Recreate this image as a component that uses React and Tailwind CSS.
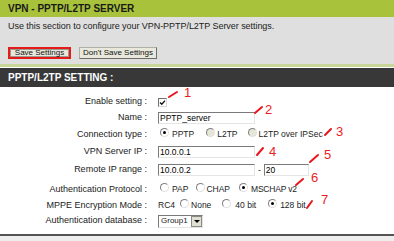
import React from "react";

const font = { fontFamily: '"Liberation Sans", Arial, sans-serif' };

function Radio({ checked, dim }) {
  return (
    <span
      className={`inline-block w-[9px] h-[9px] rounded-full border border-t-[#808080] border-l-[#808080] border-b-[#e0e0e0] border-r-[#e0e0e0] relative shrink-0 ${
        dim ? "bg-[#e6e6d8]" : "bg-white"
      }`}
    >
      {checked && (
        <span className="absolute left-[2px] top-[2px] w-[3px] h-[3px] rounded-full bg-black" />
      )}
    </span>
  );
}

function Input({ value, w }) {
  return (
    <div
      className={`${w} h-[12px] bg-white border border-t-[#7a7a7a] border-l-[#7a7a7a] border-b-[#e4e4e4] border-r-[#e4e4e4] text-[8.5px] leading-[10px] pl-[1px] text-black`}
    >
      {value}
    </div>
  );
}

function Row({ label, h, children }) {
  return (
    <div className={`flex items-center ${h}`}>
      <div className="w-[148px] text-right text-[9px] text-[#222] pr-[1px] whitespace-nowrap">
        {label}
      </div>
      <div className="pl-[10px] flex items-center text-[8.5px] text-[#222] whitespace-nowrap">
        {children}
      </div>
    </div>
  );
}

export default function App() {
  const slashes = [
    [169, 97, 177, 92],
    [255, 113, 262, 107],
    [325, 135, 331, 129],
    [257, 155, 263, 148],
    [310, 162, 318, 155],
    [296, 185, 303, 179],
    [307, 208, 312, 201],
  ];
  const nums = [
    ["1", 184, 86],
    ["2", 265, 103],
    ["3", 336, 125],
    ["4", 269, 145],
    ["5", 324, 148],
    ["6", 311, 171],
    ["7", 321, 193],
  ];
  return (
    <div className="w-[394px] h-[241px] bg-white overflow-hidden relative" style={font}>
      <div className="h-[17px] bg-[#a8c23c] flex items-center pl-[8px] text-[10px] font-bold text-[#1a1a1a]">
        VPN - PPTP/L2TP SERVER
      </div>
      <div className="h-[47px] bg-[#dfdfdf] pl-[8px] pt-[4px]">
        <div className="text-[9px] text-[#222] leading-[11px] tracking-[-0.05px]">
          Use this section to configure your VPN-PPTP/L2TP Server settings.
        </div>
        <div className="flex items-center gap-[8px] mt-[15px]">
          <div className="border-2 border-[#e41b1b] h-[12px] w-[63px] flex items-center justify-center">
            <div className="w-full h-full bg-[#e8e8dc] border border-[#9a9a8e] flex items-center justify-center text-[8px] text-[#111] leading-none whitespace-nowrap">
              Save Settings
            </div>
          </div>
          <div className="h-[12px] w-[78px] bg-[#e8e8dc] border border-[#b0b0a4] border-r-[#6e6e66] border-b-[#6e6e66] flex items-center justify-center text-[8px] text-[#111] leading-none whitespace-nowrap">
            Don't Save Settings
          </div>
        </div>
      </div>
      <div className="h-[3px] bg-[#c9d69a]" />
      <div className="h-[1px] bg-white" />
      <div className="h-[19px] bg-[#383838] flex items-center pl-[8px] text-[10px] font-bold text-white">
        PPTP/L2TP SETTING :
      </div>
      <div className="pt-[7px]">
        <Row label="Enable setting :" h="h-[16px]">
          <span className="w-[9px] h-[9px] bg-white border border-t-[#707070] border-l-[#707070] border-b-[#d8d8d8] border-r-[#d8d8d8] relative inline-block">
            <svg className="absolute left-0 top-0" width="7" height="7" viewBox="0 0 7 7">
              <path d="M1 3.5 L2.8 5.3 L6 1.6" stroke="#111" strokeWidth="1.3" fill="none" />
            </svg>
          </span>
        </Row>
        <Row label="Name :" h="h-[16px]">
          <Input value="PPTP_server" w="w-[97px]" />
        </Row>
        <Row label="Connection type :" h="h-[17px]">
          <div className="flex items-center">
            <span className="ml-[2px]"><Radio checked /></span>
            <span className="ml-[3px]">PPTP</span>
            <span className="ml-[12px]"><Radio dim /></span>
            <span className="ml-[2px]">L2TP</span>
            <span className="ml-[10px]"><Radio dim /></span>
            <span className="ml-[2px]">L2TP over IPSec</span>
          </div>
        </Row>
        <Row label="VPN Server IP :" h="h-[17px]">
          <Input value="10.0.0.1" w="w-[97px]" />
        </Row>
        <Row label="Remote IP range :" h="h-[20px]">
          <Input value="10.0.0.2" w="w-[97px]" />
          <span className="mx-[3px]">-</span>
          <Input value="20" w="w-[45px]" />
        </Row>
        <Row label="Authentication Protocol :" h="h-[19px]">
          <div className="flex items-center">
            <span className="ml-[2px]"><Radio /></span>
            <span className="ml-[3px]">PAP</span>
            <span className="ml-[8px]"><Radio /></span>
            <span className="ml-[1px]">CHAP</span>
            <span className="ml-[9px]"><Radio checked /></span>
            <span className="ml-[3px] tracking-[-0.2px]">MSCHAP v2</span>
          </div>
        </Row>
        <Row label="MPPE Encryption Mode :" h="h-[13px]">
          <div className="flex items-center">
            <span>RC4</span>
            <span className="ml-[5px]"><Radio /></span>
            <span className="ml-[2px]">None</span>
            <span className="ml-[11px]"><Radio /></span>
            <span className="ml-[4px]">40 bit</span>
            <span className="ml-[12px]"><Radio checked /></span>
            <span className="ml-[3px]">128 bit</span>
          </div>
        </Row>
        <Row label="Authentication database :" h="h-[18px]">
          <div className="w-[45px] h-[13px] bg-white border border-t-[#7a7a7a] border-l-[#7a7a7a] border-b-[#e4e4e4] border-r-[#e4e4e4] flex items-center">
            <span className="flex-1 pl-[2px] text-[8px] leading-none">Group1</span>
            <span className="w-[11px] h-[11px] bg-[#e0e0d4] border border-[#8a8a80] flex items-center justify-center">
              <span className="w-0 h-0 border-l-[3px] border-r-[3px] border-t-[3px] border-l-transparent border-r-transparent border-t-black" />
            </span>
          </div>
        </Row>
      </div>
      <div className="absolute left-0 right-0 top-[234px] h-[2px] bg-[#555]" />
      <div className="absolute left-0 right-0 top-[236px] h-[5px] bg-[#eeeeee]" />

      <svg className="absolute left-0 top-0 pointer-events-none" width="394" height="241">
        {slashes.map(([x1, y1, x2, y2], i) => (
          <line key={i} x1={x1} y1={y1} x2={x2} y2={y2} stroke="#e8161d" strokeWidth="2" strokeLinecap="round" />
        ))}
      </svg>
      {nums.map(([n, x, y]) => (
        <span
          key={n}
          className="absolute text-[13px] leading-[13px] text-[#ea1c24]"
          style={{ left: x, top: y }}
        >
          {n}
        </span>
      ))}
    </div>
  );
}
